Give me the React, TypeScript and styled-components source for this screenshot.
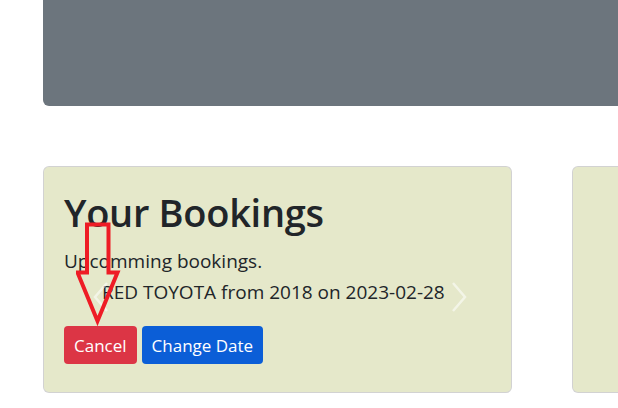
import React from "react";
import styled, { createGlobalStyle } from "styled-components";

const Global = createGlobalStyle`
  html, body { margin: 0; padding: 0; background: #fff; }
  body { font-family: "Open Sans", "Noto Sans", sans-serif; color: #212529; overflow: hidden; }
  * { box-sizing: border-box; }
`;

const Page = styled.div`
  width: 618px;
  height: 408px;
  overflow: hidden;
  padding-left: 43px;
  display: flex;
  flex-direction: column;
`;

const Banner = styled.div`
  height: 106px;
  width: 700px;
  background: #6c757d;
  border-radius: 0 0 0 6px;
  flex-shrink: 0;
`;

const CardRow = styled.div`
  margin-top: 60px;
  display: flex;
  gap: 60px;
`;

const Card = styled.div`
  position: relative;
  flex-shrink: 0;
  width: 469px;
  height: 227px;
  background: #e5e8ca;
  background-clip: padding-box;
  border: 1px solid rgba(0, 0, 0, 0.175);
  border-radius: 6px;
  padding: 22px 20px;
`;

const Title = styled.h1`
  margin: 0;
  font-size: 38px;
  font-weight: 600;
  line-height: 46px;
  letter-spacing: -0.3px;
`;

const Sub = styled.p`
  margin: 12px 0 0;
  font-size: 19px;
  line-height: 28px;
`;

const Slide = styled.div`
  position: relative;
  height: 40px;
  margin-top: 3px;
  padding-left: 38px;
  font-size: 19px;
  line-height: 28px;
`;

const Chevron = styled.svg<{ $side: "left" | "right" }>`
  position: absolute;
  top: 3px;
  ${(p) => (p.$side === "left" ? "left: 29px;" : "left: 387px;")}
`;

const Actions = styled.div`
  display: flex;
  gap: 5px;
  margin-top: 8px;
`;

const Button = styled.button<{ $variant: "danger" | "primary" }>`
  height: 38px;
  border: none;
  border-radius: 4px;
  padding: 0 10px;
  font-family: inherit;
  font-size: 17px;
  color: #fff;
  background: ${(p) => (p.$variant === "danger" ? "#dc3545" : "#0b5ed7")};
`;

const Annotation = styled.svg`
  position: absolute;
  left: 32px;
  top: 55px;
  pointer-events: none;
`;

export default function App() {
  return (
    <>
      <Global />
      <Page>
        <Banner />
        <CardRow>
          <Card>
            <Title>Your Bookings</Title>
            <Sub>Upcomming bookings.</Sub>
            <Slide>
              RED TOYOTA from 2018 on 2023-02-28
              <Chevron $side="left" width="16" height="32" viewBox="0 0 16 32">
                <path d="M14 2 L2 16 L14 30" fill="none" stroke="rgba(255,255,255,0.55)" strokeWidth="2.5" />
              </Chevron>
              <Chevron $side="right" width="16" height="32" viewBox="0 0 16 32">
                <path d="M2 2 L14 16 L2 30" fill="none" stroke="rgba(255,255,255,0.55)" strokeWidth="2.5" />
              </Chevron>
            </Slide>
            <Actions>
              <Button $variant="danger">Cancel</Button>
              <Button $variant="primary">Change Date</Button>
            </Actions>
            <Annotation width="46" height="104" viewBox="0 0 46 104">
              <path
                d="M11 2.5 H32.5 V50.5 H41.5 L21.5 99 L1.5 50.5 H11 Z"
                fill="none"
                stroke="#ee1c25"
                strokeWidth="4"
                strokeLinejoin="miter"
              />
            </Annotation>
          </Card>
          <Card />
        </CardRow>
      </Page>
    </>
  );
}
